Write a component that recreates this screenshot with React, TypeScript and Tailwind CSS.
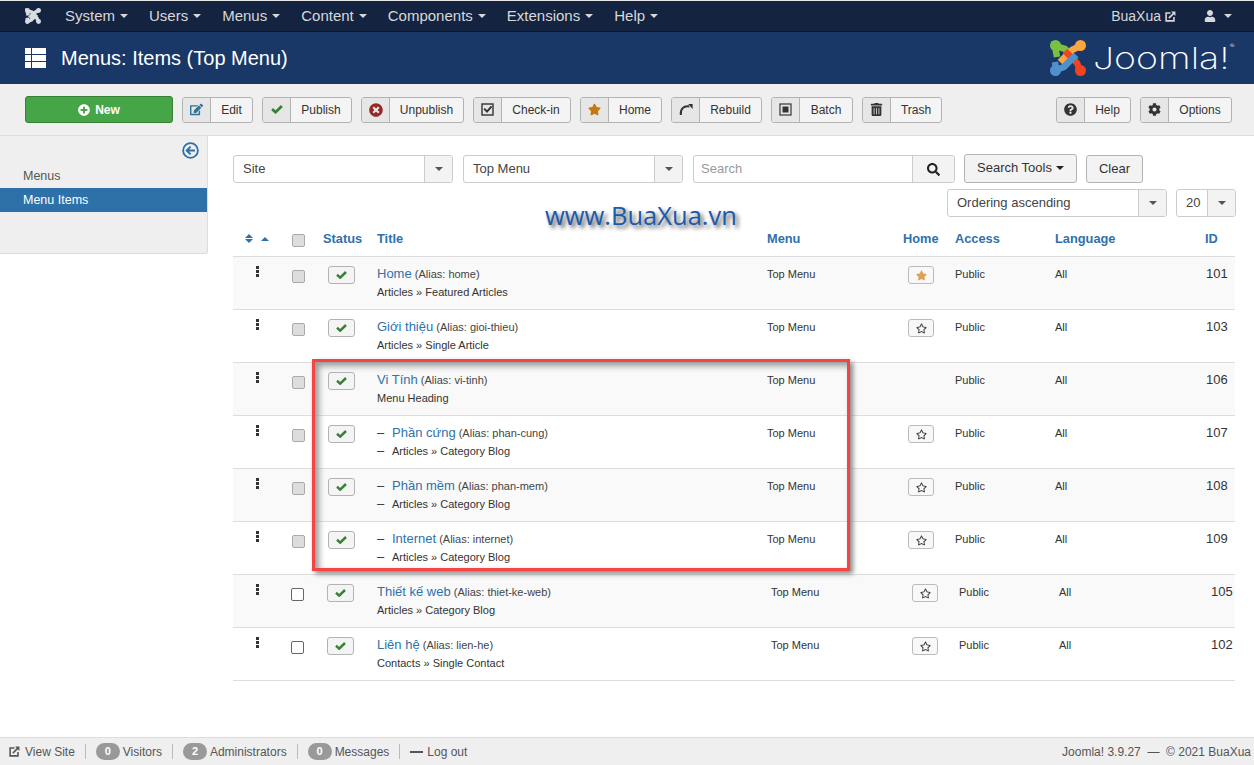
import React from 'react';
import {
  FaCog, FaEdit, FaPlusCircle, FaQuestionCircle, FaRegStar, FaSearch,
  FaStar, FaTimesCircle, FaTrashAlt, FaUser,
} from 'react-icons/fa';

const Caret = ({ className = 'border-t-[#555]' }: { className?: string }) => (
  <span className={`inline-block w-0 h-0 border-x-[4px] border-x-transparent border-t-[4px] ${className}`}></span>
);

const OutIcon = ({ size = 12 }: { size?: number }) => (
  <svg width={size} height={size} viewBox="0 0 12 12" fill="none" stroke="currentColor" strokeWidth="1.7">
    <path d="M6 2.2H1.2v8.6h8.6V6.5" />
    <path d="M4.2 7.8 10 2" />
    <path d="M6.6.6h4.8v4.8z" fill="currentColor" stroke="none" />
  </svg>
);

const CheckMark = ({ width = 11, color = '#378137' }: { width?: number; color?: string }) => (
  <svg width={width} height={(width * 8) / 11} viewBox="0 0 11 8" fill="none">
    <path d="M1 3.8 4.2 6.6 10 1" stroke={color} strokeWidth="2.5" />
  </svg>
);

const JoomlaMark = ({ mono = false, size = 36 }: { mono?: boolean; size?: number }) => {
  const green = mono ? '#d8dce2' : '#7ac143';
  const orange = mono ? '#d8dce2' : '#f9a541';
  const red = mono ? '#d8dce2' : '#f44321';
  const blue = mono ? '#d8dce2' : '#5091cd';
  return (
    <svg width={size} height={size} viewBox="0 0 36 36" fill="none" strokeWidth={mono ? 8 : 6.5}>
      <path d="M7 17 5 6l10 3 11 11" stroke={green} />
      <circle cx="5.5" cy="5.5" r="5.5" fill={green} />
      <path d="M10 22 22 10l8-4" stroke={orange} />
      <circle cx="30.5" cy="5.5" r="5.5" fill={orange} />
      <path d="M15 11 27 23l3 7" stroke={red} />
      <circle cx="30.5" cy="30.5" r="5.5" fill={red} />
      <path d="M26 15 14 27l-8 3-1-8" stroke={blue} />
      <circle cx="5.5" cy="30.5" r="5.5" fill={blue} />
    </svg>
  );
};

const CheckInIcon = () => (
  <svg width="13" height="13" viewBox="0 0 13 13" fill="none">
    <rect x="1" y="1" width="11" height="11" stroke="#333" strokeWidth="1.4" />
    <path d="M3.2 5.6 6 8.6l4.6-5.2" stroke="#333" strokeWidth="2" />
  </svg>
);

const RebuildIcon = () => (
  <svg width="14" height="13" viewBox="0 0 14 13" fill="none">
    <path d="M1.8 12C1.2 6 4.5 2.4 10.4 3.4" stroke="#333" strokeWidth="2" />
    <path d="M9.2 1h4.4v5z" fill="#333" />
  </svg>
);

const BatchIcon = () => (
  <svg width="13" height="13" viewBox="0 0 13 13" fill="none">
    <rect x="1" y="1" width="11" height="11" stroke="#444" strokeWidth="1.3" />
    <rect x="3.5" y="3.5" width="6" height="6" fill="#333" />
  </svg>
);

const BackIcon = () => (
  <svg width="17" height="17" viewBox="0 0 17 17" fill="none" stroke="#2d71a8">
    <circle cx="8.5" cy="8.5" r="7.4" strokeWidth="1.8" />
    <path d="M13 8.5H5.2M8.6 4.6 4.7 8.5l3.9 3.9" strokeWidth="2" />
  </svg>
);

const ToolButton = ({ width, icon, label }: { width: string; icon: React.ReactNode; label: string }) => (
  <div className={`flex h-[26px] ${width} rounded-[3px] border border-[#b3b3b3] bg-[#f4f4f4] overflow-hidden`}>
    <span className="w-[28px] shrink-0 flex items-center justify-center bg-[#e6e6e6] border-r border-[#b3b3b3]">{icon}</span>
    <span className="flex-1 text-center text-[12px] leading-[25px] text-[#333]">{label}</span>
  </div>
);

const Select = ({ width, label }: { width: string; label: string }) => (
  <div className={`flex h-[28px] ${width} rounded-[3px] border border-[#ccc] bg-white overflow-hidden`}>
    <span className="flex-1 pl-[9px] text-[13px] leading-[26px] text-[#444]">{label}</span>
    <span className="w-[28px] shrink-0 flex items-center justify-center bg-[#f3f3f3] border-l border-[#ccc]">
      <Caret />
    </span>
  </div>
);

const Drag = () => (
  <div className="flex flex-col gap-[1px] w-[3px]">
    <span className="h-[3px] bg-[#333]"></span>
    <span className="h-[3px] bg-[#333]"></span>
    <span className="h-[3px] bg-[#333]"></span>
  </div>
);

type Item = {
  title: string; alias: string; sub: string; id: number;
  level?: boolean; star?: 'on' | 'off' | 'none'; pasted?: boolean;
};

const items: Item[] = [
  { title: 'Home', alias: 'home', sub: 'Articles » Featured Articles', id: 101, star: 'on' },
  { title: 'Giới thiệu', alias: 'gioi-thieu', sub: 'Articles » Single Article', id: 103 },
  { title: 'Vi Tính', alias: 'vi-tinh', sub: 'Menu Heading', id: 106, star: 'none' },
  { title: 'Phần cứng', alias: 'phan-cung', sub: 'Articles » Category Blog', id: 107, level: true },
  { title: 'Phần mềm', alias: 'phan-mem', sub: 'Articles » Category Blog', id: 108, level: true },
  { title: 'Internet', alias: 'internet', sub: 'Articles » Category Blog', id: 109, level: true },
  { title: 'Thiết kế web', alias: 'thiet-ke-web', sub: 'Articles » Category Blog', id: 105, pasted: true },
  { title: 'Liên hệ', alias: 'lien-he', sub: 'Contacts » Single Contact', id: 102, pasted: true },
];

const Row = ({ item, odd }: { item: Item; odd: boolean }) => {
  const cols = item.pasted
    ? 'grid-cols-[58px_36px_50px_394px_141px_47px_100px_152px_1fr]'
    : 'grid-cols-[58px_37px_49px_390px_141px_47px_100px_151px_1fr]';
  return (
    <div className={`grid ${cols} h-[53px] border-b border-[#ddd] ${odd ? 'bg-[#f9f9f9]' : 'bg-white'}`}>
      <div className="pl-[23px] pt-[9px]"><Drag /></div>
      <div className="pt-[13px]">
        <span className={item.pasted
          ? 'block w-[13px] h-[13px] rounded-[2px] border border-[#666] bg-white'
          : 'block w-[13px] h-[13px] ml-[1px] rounded-[2px] border border-[#aaa] bg-[#ddd]'}></span>
      </div>
      <div className="pt-[9px]">
        <span className="flex w-[27px] h-[18px] items-center justify-center rounded-[3px] border border-[#b3b3b3] bg-[#f4f4f4]">
          <CheckMark />
        </span>
      </div>
      <div className="pt-[7px]">
        <div className="h-[18px] leading-[18px] whitespace-nowrap">
          {item.level && <span className="inline-block w-[15px] text-[13px] text-[#333]">–</span>}
          <span className="text-[13px] text-[#3071a9]">{item.title}</span>
          <span className="text-[11px] text-[#444]"> (Alias: {item.alias})</span>
        </div>
        <div className="mt-[1px] h-[18px] leading-[18px] text-[11px] text-[#333] whitespace-nowrap">
          {item.level && <span className="inline-block w-[15px] text-[13px]">–</span>}
          {item.sub}
        </div>
      </div>
      <div className="pt-[7px] text-[11px] leading-[20px] text-[#333]">Top Menu</div>
      <div className="pt-[9px]">
        {item.star !== 'none' && (
          <span className="flex w-[26px] h-[18px] items-center justify-center rounded-[3px] border border-[#bbb] bg-[#f8f8f8]">
            {item.star === 'on'
              ? <FaStar className="text-[#dda15a] text-[11px]" />
              : <FaRegStar className="text-[#333] text-[11px]" />}
          </span>
        )}
      </div>
      <div className="pt-[7px] text-[11px] leading-[20px] text-[#333]">Public</div>
      <div className="pt-[7px] text-[11px] leading-[20px] text-[#333]">All</div>
      <div className="pt-[7px] text-[13px] leading-[20px] text-[#333]">{item.id}</div>
    </div>
  );
};

const navItems = ['System', 'Users', 'Menus', 'Content', 'Components', 'Extensions', 'Help'];

const App = () => {
  return (
    <div className="h-[765px] flex flex-col overflow-hidden bg-white font-['Liberation_Sans',Arial,sans-serif] text-[#333] relative">
      {/* top nav */}
      <nav className="h-[32px] shrink-0 flex items-center bg-[#132340] border-t border-t-[#e8e8e8] border-b border-b-[#0c1629] text-[#d8d8d8]">
        <span className="ml-[25px] mr-[24px] flex"><JoomlaMark mono size={16} /></span>
        <div className="flex gap-[21px]">
          {navItems.map((n) => (
            <span key={n} className="text-[15px] flex items-center gap-[5px]">{n}<Caret className="border-t-[#d8d8d8]" /></span>
          ))}
        </div>
        <div className="ml-auto flex items-center text-[14px] pr-[22px]">
          <span className="mr-[4px]">BuaXua</span>
          <OutIcon size={11} />
          <FaUser className="ml-[28px] text-[12px]" />
          <span className="ml-[8px] flex"><Caret className="border-t-[#d8d8d8]" /></span>
        </div>
      </nav>

      {/* title bar */}
      <header className="h-[52px] shrink-0 flex items-center bg-[#1a3867] text-white pl-[25px] pr-[22px]">
        <div className="grid grid-cols-[6px_14px] grid-rows-3 gap-[1px] w-[21px] h-[20px] mr-[15px]">
          <span className="bg-white"></span><span className="bg-white"></span>
          <span className="bg-white"></span><span className="bg-white"></span>
          <span className="bg-white"></span><span className="bg-white"></span>
        </div>
        <h1 className="text-[20px] font-normal">Menus: Items (Top Menu)</h1>
        <div className="ml-auto flex items-center gap-[7px]">
          <JoomlaMark />
          <span className="block w-[139px] origin-left scale-x-[1.25] text-[30px] leading-none font-extralight font-['Inter',sans-serif] text-white whitespace-nowrap">
            Joomla!<sup className="text-[6px] align-top relative top-[3px]">®</sup>
          </span>
        </div>
      </header>

      {/* toolbar */}
      <div className="h-[52px] shrink-0 flex items-center gap-[9px] bg-[#efefef] border-b border-[#ddd] pl-[25px] pr-[22px]">
        <div className="flex items-center justify-center gap-[5px] w-[148px] h-[27px] rounded-[3px] border border-[#378137] bg-[#46a546] text-white text-[12px] font-bold">
          <FaPlusCircle className="text-[12px]" />New
        </div>
        <ToolButton width="w-[71px]" icon={<FaEdit className="text-[#2f7398] text-[13px]" />} label="Edit" />
        <ToolButton width="w-[90px]" icon={<CheckMark width={12} />} label="Publish" />
        <ToolButton width="w-[103px]" icon={<FaTimesCircle className="text-[#942a25] text-[14px]" />} label="Unpublish" />
        <ToolButton width="w-[98px]" icon={<CheckInIcon />} label="Check-in" />
        <ToolButton width="w-[82px]" icon={<FaStar className="text-[#c7770f] text-[13px]" />} label="Home" />
        <ToolButton width="w-[91px]" icon={<RebuildIcon />} label="Rebuild" />
        <ToolButton width="w-[82px]" icon={<BatchIcon />} label="Batch" />
        <ToolButton width="w-[80px]" icon={<FaTrashAlt className="text-[#333] text-[13px]" />} label="Trash" />
        <div className="ml-auto flex gap-[9px]">
          <ToolButton width="w-[75px]" icon={<FaQuestionCircle className="text-[#333] text-[13px]" />} label="Help" />
          <ToolButton width="w-[92px]" icon={<FaCog className="text-[#333] text-[13px]" />} label="Options" />
        </div>
      </div>

      {/* main */}
      <div className="flex-1 flex min-h-0">
        <aside className="w-[208px] h-[118px] shrink-0 bg-[#efefef] border-r border-b border-[#ddd] rounded-br-[3px]">
          <div className="flex justify-end pt-[6px] pr-[8px] h-[28px]"><BackIcon /></div>
          <div className="h-[24px] pl-[23px] text-[12.5px] leading-[24px] text-[#555]">Menus</div>
          <div className="h-[24px] pl-[23px] text-[12.5px] leading-[24px] text-white bg-[#2d71a8]">Menu Items</div>
        </aside>

        <main className="flex-1 pl-[25px] pr-[19px] pt-[19px]">
          <div className="flex items-start">
            <Select width="w-[220px]" label="Site" />
            <div className="ml-[10px]"><Select width="w-[220px]" label="Top Menu" /></div>
            <div className="ml-[10px] flex h-[28px] w-[262px] rounded-[3px] border border-[#ccc] overflow-hidden">
              <span className="flex-1 pl-[7px] text-[13px] leading-[26px] text-[#999]">Search</span>
              <span className="w-[42px] flex items-center justify-center bg-[#f3f3f3] border-l border-[#ccc]">
                <FaSearch className="text-[#222] text-[13px]" />
              </span>
            </div>
            <div className="ml-[9px] flex items-center justify-center gap-[4px] h-[29px] w-[113px] -mt-[1px] pb-[1px] rounded-[3px] border border-[#b3b3b3] bg-[#f3f3f3] text-[13px] text-[#333]">
              Search Tools<Caret className="border-t-[#222]" />
            </div>
            <div className="ml-[9px] flex items-center justify-center h-[28px] w-[57px] rounded-[3px] border border-[#b3b3b3] bg-[#f3f3f3] text-[13px] text-[#333]">Clear</div>
          </div>
          <div className="flex justify-end gap-[9px] mt-[6px] -mr-[1px]">
            <Select width="w-[220px]" label="Ordering ascending" />
            <Select width="w-[60px]" label="20" />
          </div>

          {/* table header */}
          <div className="grid grid-cols-[58px_37px_49px_390px_136px_52px_100px_150px_1fr] items-center h-[32px] pb-[4px] mt-[8px] border-b border-[#ddd] text-[12.8px] font-bold text-[#3071a9]">
            <div className="pl-[12px] flex items-center gap-[8px]">
              <span className="flex flex-col gap-[1px]">
                <span className="w-0 h-0 border-x-[4px] border-x-transparent border-b-[4px] border-b-[#3071a9]"></span>
                <span className="w-0 h-0 border-x-[4px] border-x-transparent border-t-[4px] border-t-[#3071a9]"></span>
              </span>
              <span className="w-0 h-0 border-x-[4px] border-x-transparent border-b-[4px] border-b-[#3071a9]"></span>
            </div>
            <div><span className="block w-[13px] h-[13px] ml-[1px] rounded-[2px] border border-[#aaa] bg-[#ddd] mt-[4px]"></span></div>
            <div className="-ml-[5px]">Status</div>
            <div>Title</div>
            <div>Menu</div>
            <div>Home</div>
            <div>Access</div>
            <div>Language</div>
            <div>ID</div>
          </div>

          {items.map((item, i) => (
            <Row key={item.id} item={item} odd={i % 2 === 0} />
          ))}
        </main>
      </div>

      {/* status bar */}
      <footer className="h-[28px] shrink-0 flex items-center bg-[#efefef] border-t border-[#ddd] pl-[9px] pr-[3px] text-[12px] text-[#555]">
        <OutIcon size={11} />
        <span className="ml-[5px]">View Site</span>
        <span className="w-px h-[15px] bg-[#bbb] mx-[10px]"></span>
        <span className="flex items-center justify-center w-[24px] h-[17px] rounded-full bg-[#999] text-white text-[11px] font-bold">0</span>
        <span className="ml-[3px]">Visitors</span>
        <span className="w-px h-[15px] bg-[#bbb] mx-[10px]"></span>
        <span className="flex items-center justify-center w-[24px] h-[17px] rounded-full bg-[#999] text-white text-[11px] font-bold">2</span>
        <span className="ml-[3px]">Administrators</span>
        <span className="w-px h-[15px] bg-[#bbb] mx-[10px]"></span>
        <span className="flex items-center justify-center w-[24px] h-[17px] rounded-full bg-[#999] text-white text-[11px] font-bold">0</span>
        <span className="ml-[3px]">Messages</span>
        <span className="w-px h-[15px] bg-[#bbb] mx-[10px]"></span>
        <span className="w-[13px] h-[2px] bg-[#555] mr-[4px]"></span>
        <span>Log out</span>
        <span className="ml-auto">Joomla! 3.9.27 &nbsp;— &nbsp;© 2021 BuaXua</span>
      </footer>

      {/* annotations pasted over the screenshot */}
      <div className="absolute left-[545px] top-[199px] text-[25.5px] leading-[32px] text-[#1a5aad] font-['Open_Sans',sans-serif] [text-shadow:3px_3px_4px_#555] whitespace-nowrap">www.BuaXua.vn</div>
      <div className="absolute left-[312px] top-[359px] w-[538px] h-[212px] border-[3px] border-[#f44444] shadow-[3px_3px_5px_#888,inset_4px_4px_6px_#999] pointer-events-none"></div>
    </div>
  );
};

export default App;
